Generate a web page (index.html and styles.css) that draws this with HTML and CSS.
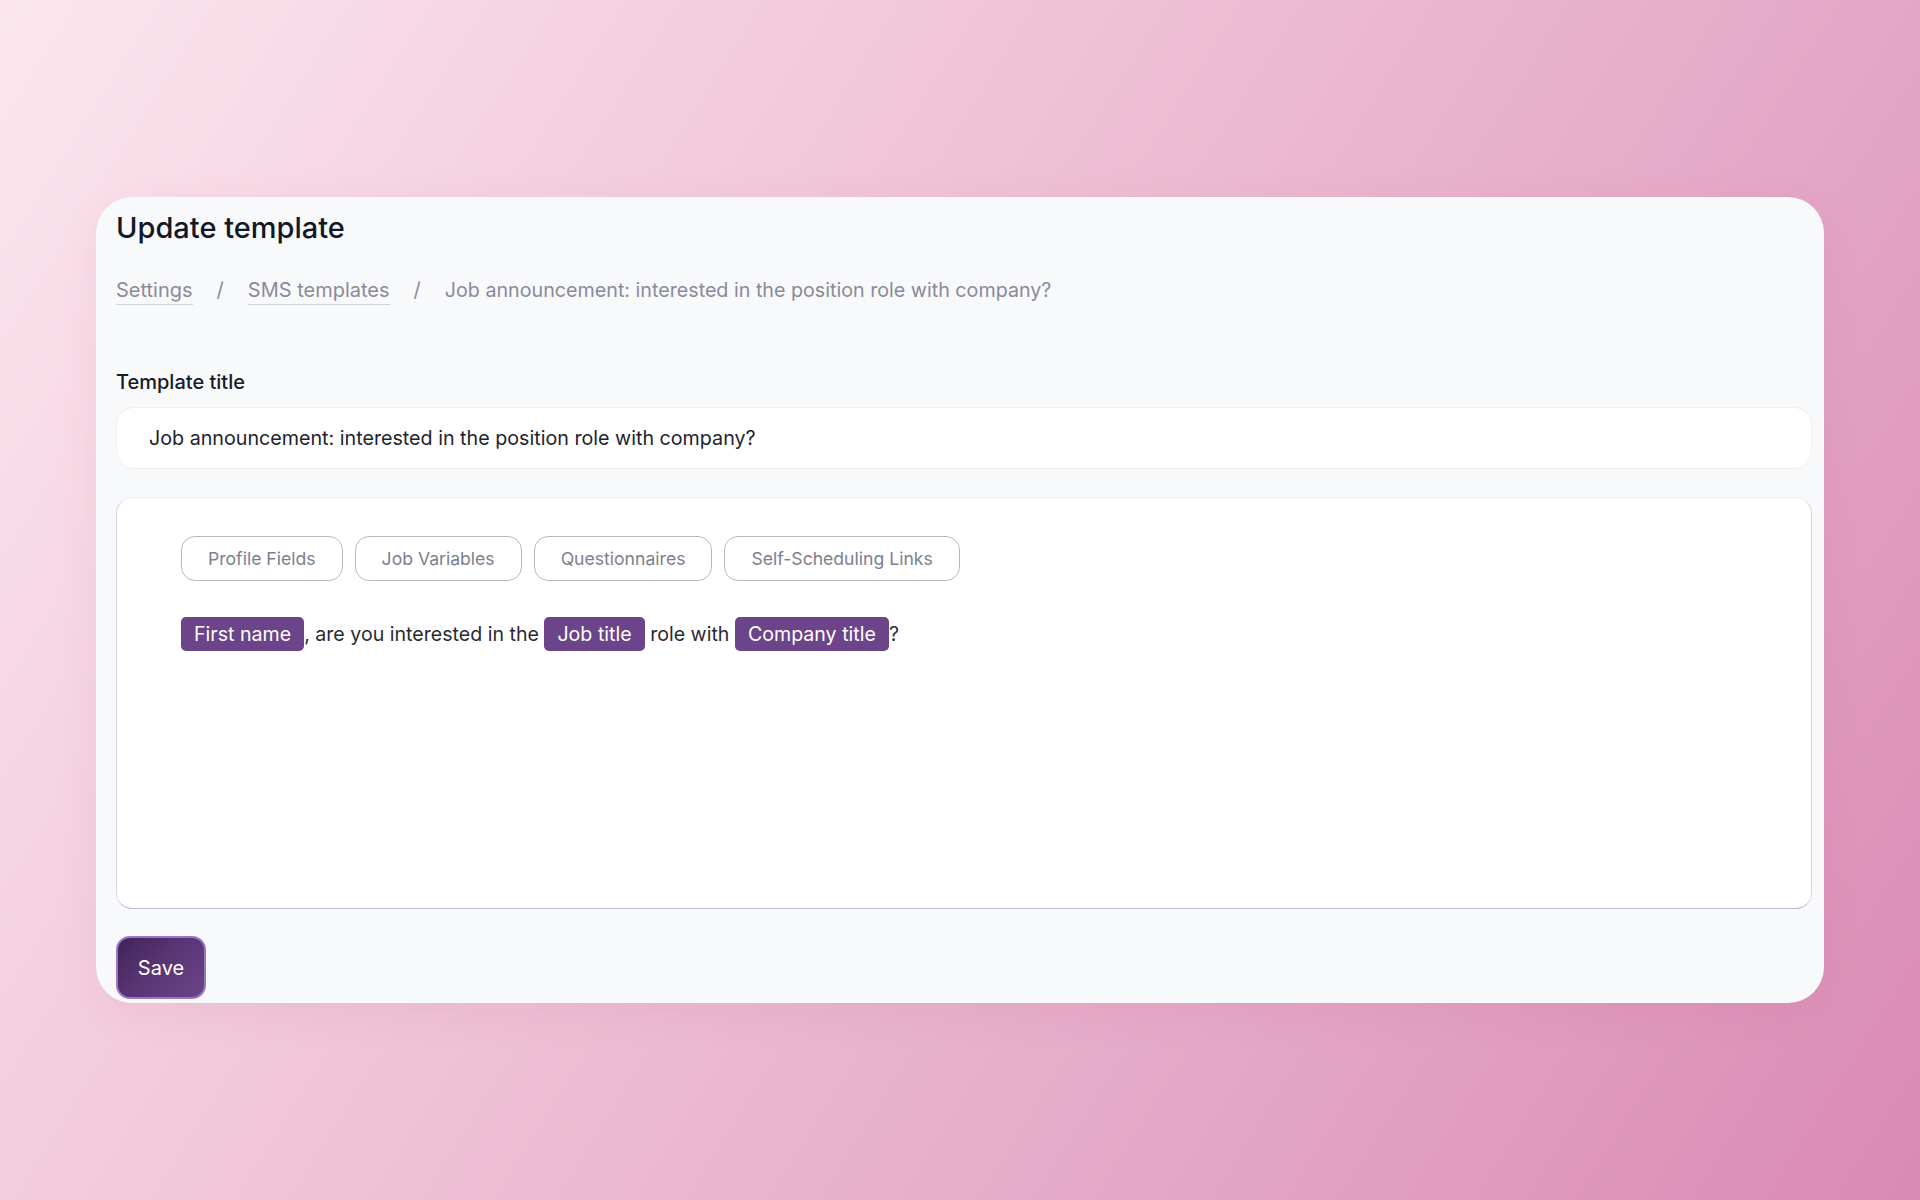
FILE: index.html
```html
<!DOCTYPE html>
<html lang="en">
<head>
<meta charset="utf-8">
<title>Update template</title>
<link rel="stylesheet" href="styles.css">
</head>
<body>
<main class="panel">
  <h1 class="panel-title">Update template</h1>
  <nav class="crumbs">
    <a class="crumb-link" href="#">Settings</a>
    <span class="crumb-sep">/</span>
    <a class="crumb-link" href="#">SMS templates</a>
    <span class="crumb-sep">/</span>
    <span class="crumb-current">Job announcement: interested in the position role with company?</span>
  </nav>

  <label class="field-label" for="tpl-title">Template title</label>
  <div class="text-input" id="tpl-title">Job announcement: interested in the position role with company?</div>

  <section class="editor">
    <div class="chip-row">
      <button class="chip">Profile Fields</button>
      <button class="chip">Job Variables</button>
      <button class="chip">Questionnaires</button>
      <button class="chip">Self-Scheduling Links</button>
    </div>
    <p class="message"><span class="token">First name</span>, are you interested in the <span class="token">Job title</span> role with <span class="token">Company title</span>?</p>
  </section>

  <button class="save-btn">Save</button>
</main>
</body>
</html>
```

FILE: styles.css
```css
* {
  box-sizing: border-box;
}

html,
body {
  height: 100%;
}

body {
  margin: 0;
  font-family: Inter, "Noto Sans", "Liberation Sans", sans-serif;
  background: linear-gradient(122deg, #fce6ee 0%, #efc3d6 40%, #e4a6c5 72%, #d98ab3 100%);
  display: flex;
  align-items: center;
  justify-content: center;
}

.panel {
  width: 1728px;
  height: 806px;
  background: #f8f9fb;
  border-radius: 36px;
  padding: 14px 12px 4px 20px;
  display: flex;
  flex-direction: column;
  box-shadow: 0 10px 40px rgba(160, 70, 120, 0.08);
}

.panel-title {
  margin: 0;
  font-size: 29px;
  line-height: 34px;
  font-weight: 500;
  color: #111827;
}

.crumbs {
  margin-top: 33px;
  display: flex;
  align-items: flex-start;
  gap: 24px;
  font-size: 20px;
  line-height: 24px;
  color: #8a8a9a;
}

.crumb-link {
  color: #8a8a9a;
  text-decoration: none;
  padding-bottom: 2px;
  border-bottom: 1px solid #d2d3db;
}

.crumb-sep {
  color: #8a8a9a;
}

.crumb-current {
  font-size: 19.7px;
}

.field-label {
  margin-top: 65px;
  font-size: 20px;
  line-height: 24px;
  font-weight: 500;
  color: #161b26;
}

.text-input {
  margin-top: 13px;
  height: 62px;
  background: #ffffff;
  border: 1px solid #eff0f3;
  border-radius: 18px;
  padding: 0 32px;
  display: flex;
  align-items: center;
  font-size: 19.7px;
  line-height: 24px;
  color: #1d2330;
}

.editor {
  margin-top: 28px;
  height: 413px;
  background: #ffffff;
  border: 1px solid #eceef2;
  border-color: #eceef2 #dcd4ee #c2b5e0 #dcd4ee;
  border-radius: 16px;
  padding: 38px 64px 0 64px;
}

.chip-row {
  display: flex;
  gap: 12px;
}

.chip {
  height: 45px;
  padding: 0 26px;
  background: #ffffff;
  border: 1px solid #b7b7bf;
  border-radius: 14px;
  font-family: inherit;
  font-size: 17.6px;
  color: #7e7e90;
}

.message {
  margin: 36px 0 0;
  font-size: 19.6px;
  line-height: 34px;
  color: #2a2a33;
}

.token {
  display: inline-block;
  background: #6b4489;
  color: #ffffff;
  border-radius: 5px;
  padding: 5px 13px;
  line-height: 24px;
  vertical-align: top;
}

.save-btn {
  margin-top: 27px;
  align-self: flex-start;
  width: 90px;
  height: 63px;
  border: 2px solid #9a77c6;
  border-radius: 14px;
  background: linear-gradient(135deg, #43235a 0%, #5a3676 50%, #6c4388 100%);
  color: #ffffff;
  font-family: inherit;
  font-size: 20px;
}
```
